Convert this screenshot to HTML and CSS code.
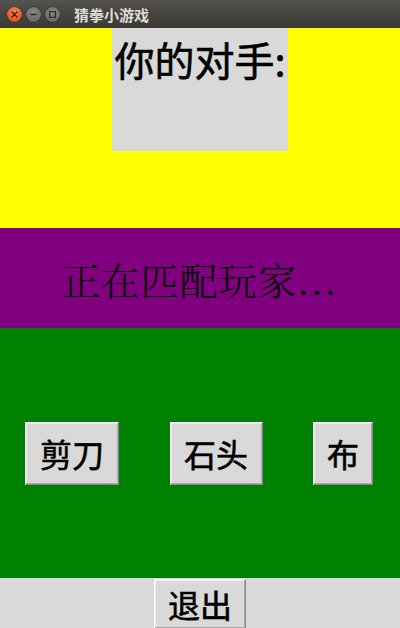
FILE: index.html
```html
<!DOCTYPE html>
<html lang="zh-CN">
<head>
<meta charset="utf-8">
<title>猜拳小游戏</title>
<link rel="stylesheet" href="styles.css">
</head>
<body>
<div class="window">
  <header class="titlebar">
    <div class="controls">
      <span class="ctl close">
        <svg width="15" height="15" viewBox="0 0 15 15"><path d="M5 5 L10 10 M10 5 L5 10" stroke="#3a1a10" stroke-width="1.4" stroke-linecap="round"/></svg>
      </span>
      <span class="ctl">
        <svg width="15" height="15" viewBox="0 0 15 15"><path d="M4.5 7.5 H10.5" stroke="#2e2d2a" stroke-width="1.6"/></svg>
      </span>
      <span class="ctl">
        <svg width="15" height="15" viewBox="0 0 15 15"><rect x="4.6" y="4.6" width="5.8" height="5.8" fill="none" stroke="#2e2d2a" stroke-width="1.2"/></svg>
      </span>
    </div>
    <span class="title">猜拳小游戏</span>
  </header>

  <section class="opponent-area">
    <div class="opponent">你的对手:</div>
  </section>

  <section class="status">
    <span class="status-text">正在匹配玩家...</span>
  </section>

  <section class="choices">
    <button class="btn btn-wide">剪刀</button>
    <button class="btn btn-wide2">石头</button>
    <button class="btn btn-narrow">布</button>
  </section>

  <footer class="footer">
    <button class="btn btn-quit">退出</button>
  </footer>
</div>
</body>
</html>
```

FILE: styles.css
```css
html, body {
  margin: 0;
  padding: 0;
  width: 400px;
  height: 628px;
  overflow: hidden;
  background: #d9d9d9;
}

.window {
  display: flex;
  flex-direction: column;
  width: 400px;
  height: 628px;
  overflow: hidden;
}

.titlebar {
  flex: 0 0 28px;
  height: 28px;
  display: flex;
  align-items: center;
  background: linear-gradient(to bottom, #55544f 0%, #46453f 45%, #3c3b37 100%);
  box-sizing: border-box;
  padding-left: 7px;
}

.controls {
  display: flex;
  gap: 4px;
  align-items: center;
  padding-top: 1px;
}

.ctl {
  width: 15px;
  height: 15px;
  border-radius: 50%;
  box-sizing: border-box;
  background: radial-gradient(circle at 50% 35%, #8a8a85 0%, #6a6a66 70%, #5a5a56 100%);
  box-shadow: 0 0 0 0.5px #2c2b28;
  display: flex;
}

.ctl.close {
  background: radial-gradient(circle at 50% 35%, #f68a5c 0%, #e9541f 65%, #c9420f 100%);
}

.ctl svg {
  display: block;
}

.title {
  margin-left: 14px;
  font-family: "Noto Sans CJK SC", "Noto Sans", sans-serif;
  font-weight: bold;
  font-size: 15px;
  color: #dfdbd2;
  line-height: 1;
  padding-top: 1px;
}

.opponent-area {
  flex: 0 0 200px;
  background: #ffff00;
  display: flex;
  justify-content: center;
  align-items: flex-start;
}

.opponent {
  width: 176px;
  height: 123px;
  background: #d9d9d9;
  font-family: "Noto Sans CJK SC", "Noto Sans", sans-serif;
  font-weight: normal;
  -webkit-text-stroke: 0.6px #000;
  font-size: 40px;
  line-height: 58px;
  padding-top: 2px;
  box-sizing: border-box;
  text-align: center;
  color: #000;
  white-space: nowrap;
}

.status {
  flex: 0 0 100px;
  background: #800080;
  display: flex;
  justify-content: center;
  align-items: center;
}

.status-text {
  font-family: "Noto Serif CJK SC", "AR PL UMing CN", "Liberation Serif", "Noto Sans CJK SC", serif;
  font-weight: 300;
  font-size: 38px;
  color: #000;
  white-space: nowrap;
  letter-spacing: 1.2px;
}

.choices {
  flex: 0 0 250px;
  background: #008000;
  display: flex;
  justify-content: flex-start;
  align-items: center;
  padding-left: 25px;
  gap: 50.5px;
  box-sizing: border-box;
}

.btn {
  font-family: "Noto Sans CJK SC", "Noto Sans", sans-serif;
  font-size: 32px;
  font-weight: normal;
  -webkit-text-stroke: 0.6px #000;
  color: #000;
  background: #d9d9d9;
  height: 63px;
  padding: 0;
  margin: 0;
  box-sizing: border-box;
  border: 1px solid;
  border-color: #ffffff #888888 #888888 #ffffff;
  box-shadow: inset -1px -1px 0 #a8a8a8, inset 1px 1px 0 #ececec;
  display: flex;
  align-items: center;
  justify-content: center;
  line-height: 1;
  flex: 0 0 auto;
}

.btn-wide { width: 94px; }
.btn-wide2 { width: 93px; }
.btn-narrow { width: 60px; }

.footer {
  flex: 0 0 50px;
  background: #d9d9d9;
  display: flex;
  justify-content: center;
  align-items: flex-start;
  padding-top: 1px;
  box-sizing: border-box;
  overflow: hidden;
}

.btn-quit {
  width: 92px;
  height: 50px;
}
```
